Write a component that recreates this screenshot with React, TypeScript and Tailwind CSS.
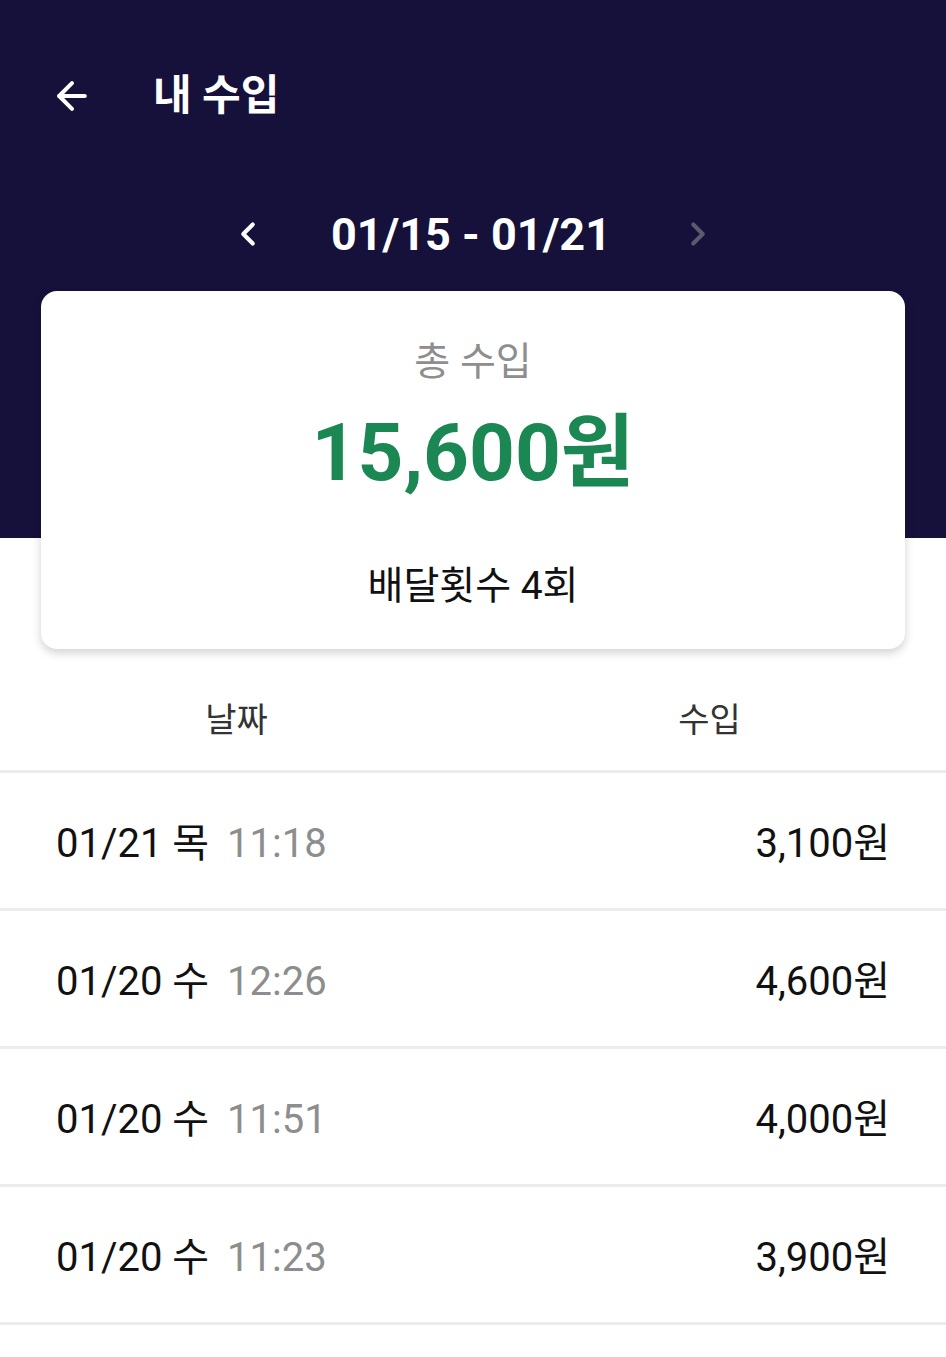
import { ArrowLeft, ChevronLeft, ChevronRight } from 'lucide-react'

interface Row {
  date: string
  day: string
  time: string
  amount: string
}

const rows: Row[] = [
  { date: '01/21', day: '목', time: '11:18', amount: '3,100원' },
  { date: '01/20', day: '수', time: '12:26', amount: '4,600원' },
  { date: '01/20', day: '수', time: '11:51', amount: '4,000원' },
  { date: '01/20', day: '수', time: '11:23', amount: '3,900원' },
]

const font = { fontFamily: 'Roboto, "Noto Sans CJK KR", sans-serif' }

function App() {
  return (
    <div className="min-h-screen bg-white w-[946px]" style={font}>
      {/* Header */}
      <div className="bg-[#16113a] pb-[247px]">
        <div className="h-[192px] flex items-start pt-[70px]">
          <button className="ml-[50px] w-[46px] h-[52px] flex items-center text-white">
            <ArrowLeft size={44} strokeWidth={2.2} />
          </button>
          <h1 className="ml-[57px] text-white text-[42px] font-bold leading-[52px]">내 수입</h1>
        </div>
        <div className="flex items-center justify-center h-[84px]">
          <ChevronLeft size={38} strokeWidth={2.6} className="text-white mr-[64px]" />
          <span className="text-white text-[45px] font-bold leading-none">01/15 - 01/21</span>
          <ChevronRight size={38} strokeWidth={2.6} className="text-[#5b5870] ml-[68px]" />
        </div>
        <div className="h-[15px]" />
      </div>

      {/* Summary card */}
      <div className="-mt-[247px] mx-[41px] bg-white rounded-[16px] shadow-[0_4px_10px_rgba(0,0,0,0.18)] h-[358px] flex flex-col items-center">
        <p className="mt-[46px] text-[39px] text-[#8e8e8e] leading-[50px]">총 수입</p>
        <p className="mt-[20px] text-[80px] font-bold text-[#1b8753] leading-[92px]">15,600원</p>
        <p className="mt-[62px] text-[39px] text-[#111] leading-[50px]">배달횟수 4회</p>
      </div>

      {/* Table header */}
      <div className="grid grid-cols-2 h-[124px] pt-[22px] items-center border-b-[3px] border-[#ececec]">
        <div className="text-[34px] text-[#333] text-center">날짜</div>
        <div className="text-[34px] text-[#333] text-center">수입</div>
      </div>

      {/* Rows */}
      {rows.map((r, i) => (
        <div key={i} className="flex items-center justify-between h-[138px] pt-[7px] px-[56px] border-b-[3px] border-[#ececec]">
          <div className="text-[40px] text-[#111] leading-none">
            {r.date} {r.day} <span className="text-[#8d8d8d] ml-[8px]">{r.time}</span>
          </div>
          <div className="text-[40px] text-[#111] leading-none">{r.amount}</div>
        </div>
      ))}
    </div>
  )
}

export default App
